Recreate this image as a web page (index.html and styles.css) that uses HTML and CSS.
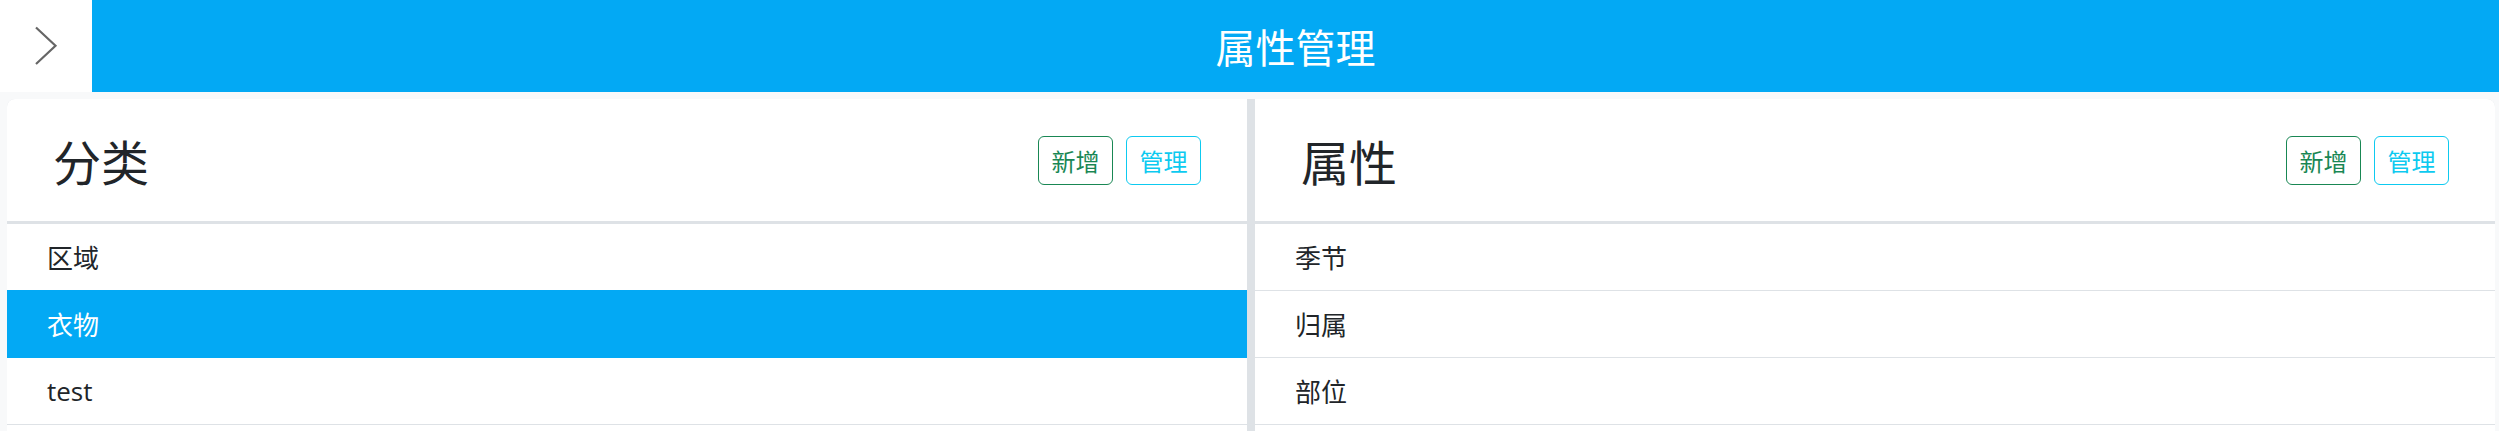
FILE: index.html
```html
<!DOCTYPE html>
<html lang="zh-CN">
<head>
<meta charset="utf-8">
<title>属性管理</title>
<link rel="stylesheet" href="styles.css">
</head>
<body>
<header class="topbar">
  <button class="back" type="button" aria-label="back">
    <svg width="92" height="92" viewBox="0 0 92 92"><path d="M36 27.5 L55.5 45.7 L36 64" fill="none" stroke="#666" stroke-width="2.2"/></svg>
  </button>
  <div class="topbar-title">属性管理</div>
</header>
<main class="main">
  <div class="board">
    <section class="panel">
      <div class="panel-head">
        <h2 class="panel-title">分类</h2>
        <div class="actions">
          <button class="btn btn-add" type="button">新增</button>
          <button class="btn btn-manage" type="button">管理</button>
        </div>
      </div>
      <ul class="list">
        <li class="item">区域</li>
        <li class="item active">衣物</li>
        <li class="item">test</li>
      </ul>
    </section>
    <section class="panel">
      <div class="panel-head">
        <h2 class="panel-title">属性</h2>
        <div class="actions">
          <button class="btn btn-add" type="button">新增</button>
          <button class="btn btn-manage" type="button">管理</button>
        </div>
      </div>
      <ul class="list">
        <li class="item">季节</li>
        <li class="item">归属</li>
        <li class="item">部位</li>
      </ul>
    </section>
  </div>
</main>
</body>
</html>
```
FILE: styles.css
```css
* { box-sizing: border-box; }
html, body { margin: 0; padding: 0; }
body {
  background: #f8f9fa;
  font-family: "Open Sans", "Noto Sans CJK SC", sans-serif;
  color: #212529;
  overflow: hidden;
}
.topbar {
  display: flex;
  height: 92px;
}
.back {
  width: 92px;
  height: 92px;
  padding: 0;
  border: 0;
  background: #fff;
  display: block;
}
.back svg { display: block; }
.topbar-title {
  flex: 1;
  background: #03a9f4;
  color: #fff;
  font-family: "Noto Sans CJK SC", sans-serif;
  font-size: 40px;
  display: flex;
  align-items: center;
  justify-content: center;
}
.main {
  padding: 7px 4px 0 7px;
}
.board {
  display: grid;
  grid-template-columns: 1fr 1fr;
  gap: 8px;
  background: #dee2e6;
  border-radius: 8px 8px 0 0;
  overflow: hidden;
  height: 400px;
}
.panel {
  background: #fff;
}
.panel-head {
  height: 125px;
  border-bottom: 3px solid #dee2e6;
  display: flex;
  align-items: center;
  justify-content: space-between;
  padding: 0 46px;
}
.panel-title {
  margin: 0;
  font-weight: 400;
  font-size: 48px;
  font-family: "Noto Sans CJK SC", sans-serif;
  line-height: 1;
}
.actions {
  display: flex;
  gap: 13px;
}
.btn {
  width: 75px;
  height: 49px;
  padding: 0;
  background: #fff;
  border: 1px solid;
  border-radius: 6px;
  font-family: "Noto Sans CJK SC", sans-serif;
  font-size: 24px;
  display: flex;
  align-items: center;
  justify-content: center;
}
.btn-add { color: #198754; border-color: #198754; }
.btn-manage { color: #0dcaf0; border-color: #0dcaf0; }
.list {
  list-style: none;
  margin: 0;
  padding: 0;
}
.item {
  height: 67px;
  border-bottom: 1px solid #dee2e6;
  padding: 0 40px;
  font-size: 26px;
  display: flex;
  align-items: center;
}
.item.active {
  background: #03a9f4;
  color: #fff;
  border-color: #03a9f4;
  margin-top: -1px;
  height: 68px;
}
```
